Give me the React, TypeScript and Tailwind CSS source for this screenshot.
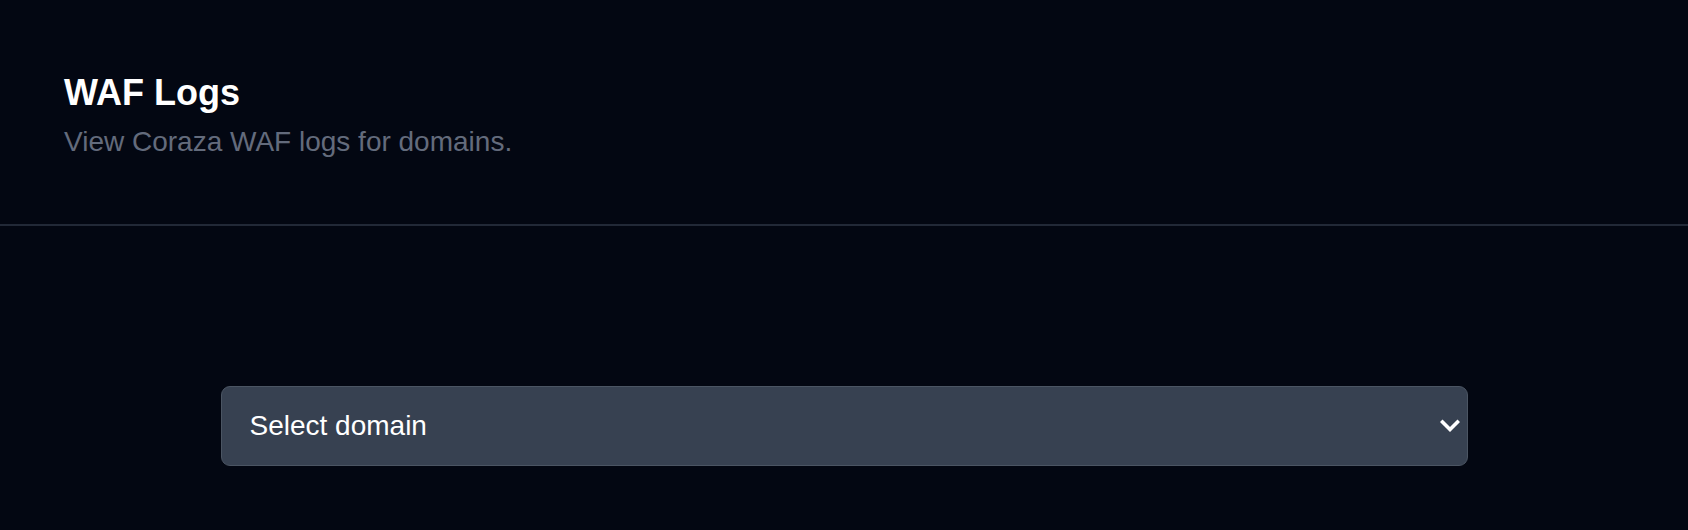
import React, { useState } from 'react';

const domains: string[] = [];

const WafLogs: React.FC = () => {
  const [domain, setDomain] = useState('');

  return (
    <div className="min-h-screen bg-[#030712] font-['Liberation_Sans',Arial,sans-serif]">
      {/* 页头 */}
      <div className="pl-[64px] pt-[73px] pb-[64px] border-b-2 border-[#222937]">
        <h1 className="text-[36px] leading-[40px] font-bold text-white">WAF Logs</h1>
        <p className="mt-[11px] text-[28px] leading-[36px] text-[#636b7c]">
          View Coraza WAF logs for domains.
        </p>
      </div>

      {/* 域名选择 */}
      <div className="pt-[160px] flex justify-center">
        <div className="relative w-[1247px]">
          <select
            value={domain}
            onChange={(e) => setDomain(e.target.value)}
            className="appearance-none w-full h-[80px] pl-[28px] pr-[50px] bg-[#374151] border border-[#4b5563] rounded-[9px] text-white text-[28px] outline-none"
          >
            <option value="">Select domain</option>
            {domains.map((d) => (
              <option key={d} value={d}>{d}</option>
            ))}
          </select>
          <svg
            className="pointer-events-none absolute right-[8px] top-1/2 -translate-y-1/2 w-[20px] h-[14px]"
            viewBox="0 0 20 14"
            fill="none"
          >
            <path d="M2.5 3L10 10.5L17.5 3" stroke="white" strokeWidth="3.6" strokeLinecap="square" />
          </svg>
        </div>
      </div>
    </div>
  );
};

export default function App() {
  return <WafLogs />;
}
